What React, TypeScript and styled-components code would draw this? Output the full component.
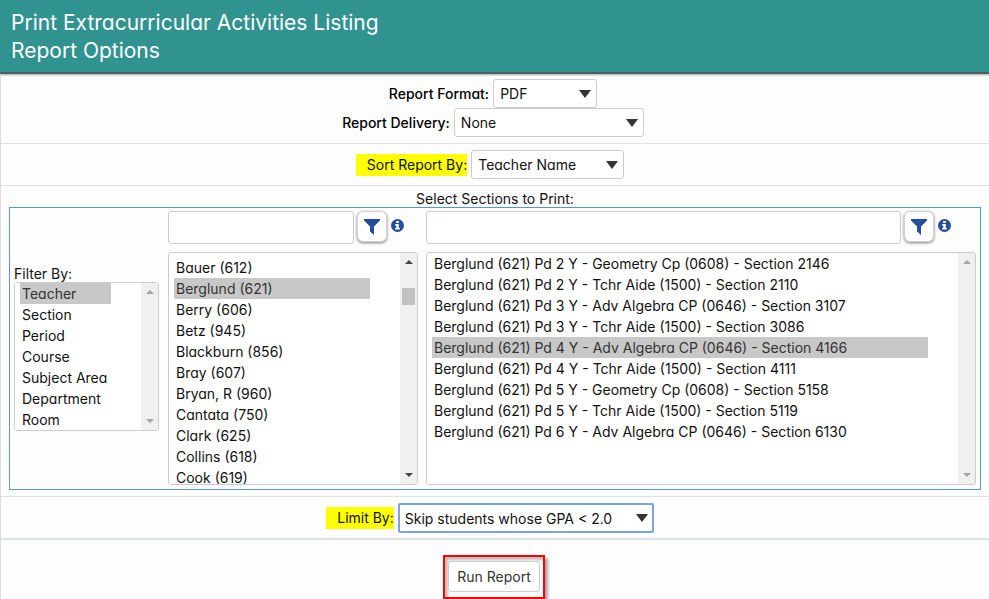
import React, { useLayoutEffect, useRef } from "react";
import styled, { createGlobalStyle, css } from "styled-components";

const GlobalStyle = createGlobalStyle`
  *, *::before, *::after { box-sizing: border-box; }
  body {
    margin: 0;
    background: #fdfdfd;
    color: #111;
    font-family: Inter, "Open Sans", sans-serif;
    font-feature-settings: "cv11";
    font-size: 14px;
    line-height: 21px;
  }
  input, select, button { font: inherit; font-feature-settings: inherit; color: inherit; margin: 0; }
`;

const Header = styled.header`
  padding: 9px 11px 7px;
  background: #31938f;
  border-bottom: 2px solid #4f5f5f;
  box-shadow: 0 1px 2px rgba(0, 0, 0, 0.35);
  color: #fff;
`;

const Title = styled.h1`
  margin: 0;
  font-size: 21px;
  line-height: 28px;
  font-weight: 400;
`;

const Form = styled.form`
  border-left: 1px solid #dcdcdc;
`;

const Row = styled.div<{ $pad: string; $rule?: number }>`
  display: flex;
  flex-direction: column;
  align-items: center;
  padding: ${(p) => p.$pad};
  border-bottom: ${(p) => p.$rule ?? 1}px solid #dfe2e2;
`;

const Field = styled.div`
  display: flex;
  align-items: center;
  gap: 4px;
`;

const Label = styled.label<{ $strong?: boolean; $marked?: boolean }>`
  ${(p) => p.$strong && css`font-weight: 500; color: #000;`}
  ${(p) =>
    p.$marked &&
    css`
      padding-left: 11px;
      line-height: 22px;
      background: #ff0;
    `}
`;

const SelectFrame = styled.span<{ $width: number }>`
  position: relative;
  display: block;
  width: ${(p) => p.$width}px;
`;

const Dropdown = styled.select<{ $active?: boolean }>`
  display: block;
  appearance: none;
  width: 100%;
  height: 29px;
  padding: 0 24px 0 6px;
  background: #fff;
  border: 1px solid #ccc;
  border-radius: 3px;
  outline: none;
  ${(p) =>
    p.$active &&
    css`
      height: 30px;
      padding-left: 5px;
      border: 2px solid #79a3e6;
      border-radius: 2px;
    `}
`;

const Arrow = styled.svg`
  position: absolute;
  right: 6px;
  top: 50%;
  margin-top: -4px;
  pointer-events: none;
`;

const SectionsTitle = styled.div`
  line-height: 16px;
`;

const Panel = styled.div`
  display: grid;
  grid-template-columns: 146px 250px minmax(0, 1fr);
  column-gap: 8px;
  align-self: stretch;
  padding: 3px 4px 4px;
  border: 1px solid #5598d8;
`;

const FilterColumn = styled.div`
  display: flex;
  flex-direction: column;
  justify-content: center;
  padding-right: 1px;
`;

const FilterLabel = styled.label`
  line-height: 17px;
`;

const Column = styled.div`
  display: flex;
  flex-direction: column;
  gap: 8px;
`;

const SearchBar = styled.div`
  display: flex;
  align-items: flex-start;
  height: 33px;
  padding-right: 14px;
`;

const WideSearchBar = styled(SearchBar)`
  padding-right: 25px;
`;

const SearchInput = styled.input`
  flex: 1;
  min-width: 0;
  height: 33px;
  padding: 0 6px;
  background: #fff;
  border: 1px solid #ccc;
  border-radius: 3px;
`;

const FilterButton = styled.button`
  display: flex;
  align-items: center;
  justify-content: center;
  width: 30px;
  height: 31px;
  margin: 0 4px 0 3px;
  padding: 0;
  background: #fff;
  border: 1px solid #d2d2d2;
  border-radius: 6px;
  box-shadow: 0 1px 3px rgba(0, 0, 0, 0.5);
`;

const InfoButton = styled.button`
  display: flex;
  width: 13px;
  height: 13px;
  margin-top: 8px;
  padding: 0;
  background: none;
  border: 0;
`;

const ListFrame = styled.div<{ $height: number }>`
  display: flex;
  height: ${(p) => p.$height}px;
  background: #fff;
  border: 1px solid #ccc;
  border-radius: 3px;
  overflow: hidden;
`;

const List = styled.select`
  flex: 1;
  min-width: 0;
  height: 100%;
  padding: 0 30px 0 5px;
  background: #fff;
  border: 0;
  border-radius: 0;
  outline: none;
  overflow-y: auto;
  scrollbar-width: none;
  &::-webkit-scrollbar { display: none; }
`;

const Item = styled.option`
  height: 21px;
  min-height: 21px;
  padding: 2px 2px 0;
  line-height: 19px;
  &:checked {
    color: #333;
    background: #c8c8c8 linear-gradient(#c8c8c8, #c8c8c8);
  }
`;

const Track = styled.div`
  display: flex;
  flex-direction: column;
  align-items: center;
  justify-content: space-between;
  width: 17px;
  padding: 7px 0;
  background: #f0f0f0;
`;

const Thumb = styled.span`
  width: 13px;
  height: 17px;
  margin: 24px 0 auto;
  background: #c1c1c1;
`;

const RunFrame = styled.div`
  padding: 4px 3px 5px;
  border: 2px solid #f00;
  box-shadow: 3px 3px 3px rgba(0, 0, 0, 0.35), inset 3px 3px 3px rgba(0, 0, 0, 0.25);
`;

const RunButton = styled.button`
  display: block;
  height: 31px;
  padding: 0 8px;
  background: #fff;
  border: 1px solid #ccc;
  border-radius: 3px;
  color: #333;
`;

const teachers = [
  "Barker (610)", "Bauer (612)", "Berglund (621)", "Berry (606)", "Betz (945)", "Blackburn (856)",
  "Bray (607)", "Bryan, R (960)", "Cantata (750)", "Clark (625)", "Collins (618)", "Cook (619)",
];

const filters = ["Teacher", "Section", "Period", "Course", "Subject Area", "Department", "Room"];

const sections = [
  "Berglund (621) Pd 2 Y - Geometry Cp (0608) - Section 2146",
  "Berglund (621) Pd 2 Y - Tchr Aide (1500) - Section 2110",
  "Berglund (621) Pd 3 Y - Adv Algebra CP (0646) - Section 3107",
  "Berglund (621) Pd 3 Y - Tchr Aide (1500) - Section 3086",
  "Berglund (621) Pd 4 Y - Adv Algebra CP (0646) - Section 4166",
  "Berglund (621) Pd 4 Y - Tchr Aide (1500) - Section 4111",
  "Berglund (621) Pd 5 Y - Geometry Cp (0608) - Section 5158",
  "Berglund (621) Pd 5 Y - Tchr Aide (1500) - Section 5119",
  "Berglund (621) Pd 6 Y - Adv Algebra CP (0646) - Section 6130",
];

type ChoiceProps = {
  id: string;
  label: string;
  value: string;
  width: number;
  strong?: boolean;
  marked?: boolean;
  active?: boolean;
};

function Choice({ id, label, value, width, strong, marked, active }: ChoiceProps) {
  return (
    <Field>
      <Label htmlFor={id} $strong={strong} $marked={marked}>{label}</Label>
      <SelectFrame $width={width}>
        <Dropdown id={id} $active={active} defaultValue={value}>
          <option>{value}</option>
        </Dropdown>
        <Arrow width="12" height="8" viewBox="0 0 12 8" aria-hidden="true">
          <path d="M0 0h12L6 8z" fill="#333" />
        </Arrow>
      </SelectFrame>
    </Field>
  );
}

type ListBoxProps = {
  id: string;
  name?: string;
  items: string[];
  selected: string;
  height: number;
  scroll?: number;
};

function ListBox({ id, name, items, selected, height, scroll }: ListBoxProps) {
  const ref = useRef<HTMLSelectElement>(null);
  useLayoutEffect(() => {
    const frame = requestAnimationFrame(() => {
      if (ref.current) ref.current.scrollTop = scroll ?? 0;
    });
    return () => cancelAnimationFrame(frame);
  }, [scroll]);
  const color = scroll ? "#444" : "#a3a3a3";
  return (
    <ListFrame $height={height}>
      <List ref={ref} id={id} aria-label={name} multiple size={7} defaultValue={[selected]}>
        {items.map((item) => <Item key={item} value={item}>{item}</Item>)}
      </List>
      <Track aria-hidden="true">
        <svg width="8" height="4" viewBox="0 0 8 4"><path d="M4 0l4 4H0z" fill={color} /></svg>
        {scroll ? <Thumb /> : null}
        <svg width="8" height="4" viewBox="0 0 8 4"><path d="M0 0h8L4 4z" fill={color} /></svg>
      </Track>
    </ListFrame>
  );
}

function SearchTools() {
  return (
    <>
      <FilterButton type="button" aria-label="Filter">
        <svg width="16" height="16" viewBox="0 0 16 16" aria-hidden="true">
          <path d="M0 0h16v1.5L10 7.5V16l-4-3.5v-5L0 1.5z" fill="#254e9b" />
        </svg>
      </FilterButton>
      <InfoButton type="button" aria-label="Information">
        <svg width="13" height="13" viewBox="0 0 13 13" aria-hidden="true">
          <circle cx="6.5" cy="6.5" r="6.5" fill="#254e9b" />
          <path d="M5.2 2h2.6v2H5.2zM4.2 5h3.6v4h1v1.6H4.2V9h1V6.5h-1z" fill="#fff" />
        </svg>
      </InfoButton>
    </>
  );
}

export default function App() {
  return (
    <>
      <GlobalStyle />
      <Header>
        <Title>Print Extracurricular Activities Listing<br />Report Options</Title>
      </Header>
      <Form onSubmit={(e) => e.preventDefault()}>
        <Row $pad="5px 12px 6px 8px">
          <Choice id="format" label="Report Format:" value="PDF" width={104} strong />
          <Choice id="delivery" label="Report Delivery:" value="None" width={190} strong />
        </Row>
        <Row $pad="6px 18px 6px 8px">
          <Choice id="sort" label="Sort Report By:" value="Teacher Name" width={153} marked />
        </Row>
        <Row $pad="5px 8px 6px">
          <SectionsTitle>Select Sections to Print:</SectionsTitle>
          <Panel>
            <FilterColumn>
              <FilterLabel htmlFor="filter">Filter By:</FilterLabel>
              <ListBox id="filter" items={filters} selected="Teacher" height={149} />
            </FilterColumn>
            <Column>
              <SearchBar>
                <SearchInput aria-label="Search teachers" />
                <SearchTools />
              </SearchBar>
              <ListBox id="teachers" name="Teachers" items={teachers} selected="Berglund (621)" height={233} scroll={17} />
            </Column>
            <Column>
              <WideSearchBar>
                <SearchInput aria-label="Search sections" />
                <SearchTools />
              </WideSearchBar>
              <ListBox id="sections" name="Sections" items={sections} selected={sections[4]} height={233} />
            </Column>
          </Panel>
        </Row>
        <Row $pad="6px 18px 5px 8px" $rule={2}>
          <Choice id="limit" label="Limit By:" value="Skip students whose GPA < 2.0" width={256} marked active />
        </Row>
        <Row $pad="15px 10px 0 8px">
          <RunFrame>
            <RunButton type="submit">Run Report</RunButton>
          </RunFrame>
        </Row>
      </Form>
    </>
  );
}
